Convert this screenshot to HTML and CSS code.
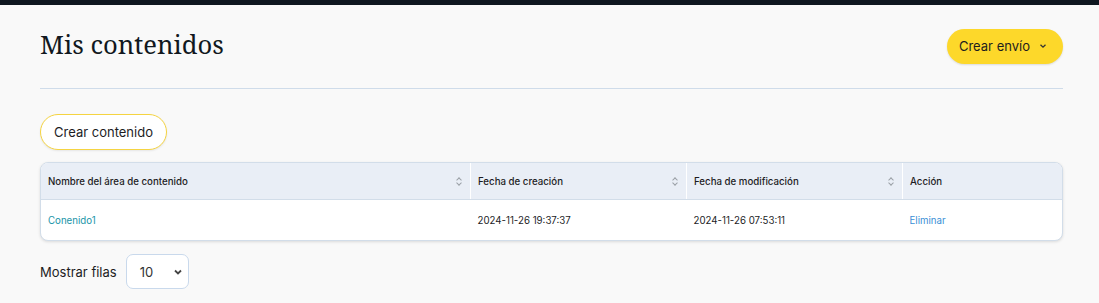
FILE: index.html
```html
<!DOCTYPE html>
<html lang="es">
<head>
  <meta charset="UTF-8">
  <meta name="viewport" content="width=device-width, initial-scale=1.0">
  <title>Mis contenidos</title>
  <link rel="stylesheet" href="styles.css">
</head>
<body>
  <div class="topbar"></div>
  <main class="page">
    <div class="page-header">
      <h1>Mis contenidos</h1>
      <button class="btn-primary">Crear envío
        <svg width="8" height="8" viewBox="0 0 8 8"><path d="M1.5 2.8 L4 5.2 L6.5 2.8" fill="none" stroke="#333" stroke-width="1.3"/></svg>
      </button>
    </div>

    <button class="btn-outline">Crear contenido</button>

    <div class="table-wrap">
      <table>
        <thead>
          <tr>
            <th class="col-name"><div class="th-in">Nombre del área de contenido <span class="sort"></span></div></th>
            <th class="col-date"><div class="th-in">Fecha de creación <span class="sort"></span></div></th>
            <th class="col-date"><div class="th-in">Fecha de modificación <span class="sort"></span></div></th>
            <th>Acción</th>
          </tr>
        </thead>
        <tbody>
          <tr>
            <td><a class="link-name" href="#">Conenido1</a></td>
            <td>2024-11-26 19:37:37</td>
            <td>2024-11-26 07:53:11</td>
            <td><a class="link-del" href="#">Eliminar</a></td>
          </tr>
        </tbody>
      </table>
    </div>

    <div class="rows">
      <label>Mostrar filas</label>
      <div class="select">10
        <svg width="10" height="10" viewBox="0 0 10 10"><path d="M2 3.5 L5 6.5 L8 3.5" fill="none" stroke="#444" stroke-width="1.8"/></svg>
      </div>
    </div>
  </main>
</body>
</html>
```

FILE: styles.css
```css
body {
  margin: 0;
  background: #f9f9f9;
  font-family: Inter, "Noto Sans", sans-serif;
  color: #1d1d1f;
}
.topbar {
  height: 5px;
  background: #0f1720;
}
.page {
  padding: 0 36px 0 40px;
}
.page-header {
  display: flex;
  justify-content: space-between;
  align-items: center;
  height: 83px;
  border-bottom: 1px solid #cfdcea;
  margin-bottom: 25px;
}
h1 {
  margin: 0;
  font-family: "Noto Serif", "DejaVu Serif", serif;
  font-weight: 400;
  font-size: 25.6px;
  color: #111820;
  padding-bottom: 4px;
}
.btn-primary {
  display: flex;
  align-items: center;
  gap: 9px;
  height: 35px;
  padding: 0 16px 0 12px;
  border: none;
  border-radius: 18px;
  background: #fdd82a;
  font-family: inherit;
  font-size: 13px;
  color: #1d1d1f;
  box-shadow: 0 1px 2px rgba(0, 0, 0, 0.12);
  margin-bottom: 1px;
}
.btn-outline {
  height: 36px;
  padding: 0 13px;
  border: 1px solid #f5d442;
  border-radius: 18px;
  background: #fff;
  font-family: inherit;
  font-size: 13px;
  color: #1d1d1f;
  box-shadow: 0 1px 2px rgba(0, 0, 0, 0.08);
}
.table-wrap {
  margin-top: 12px;
  border: 1px solid #d2dde9;
  border-radius: 8px;
  overflow: hidden;
  background: #fff;
  box-shadow: 0 1px 3px rgba(0, 0, 0, 0.12);
}
table {
  width: 100%;
  border-collapse: collapse;
  font-size: 9.7px;
}
th {
  background: #e9eef6;
  text-align: left;
  font-weight: 500;
  height: 36px;
  padding: 0 7px;
  border-bottom: 1px solid #d2dde9;
  border-right: 1px solid #fff;
}
th:last-child {
  border-right: none;
}
.col-name {
  width: 415px;
}
.col-date {
  width: 201px;
}
.th-in {
  display: flex;
  justify-content: space-between;
  align-items: center;
}
.sort {
  width: 7px;
  height: 11px;
  position: relative;
}
.sort::before,
.sort::after {
  content: '';
  position: absolute;
  left: 1px;
  width: 3px;
  height: 3px;
  border-left: 1px solid #9aa0a6;
  border-top: 1px solid #9aa0a6;
}
.sort::before {
  top: 2px;
  transform: rotate(45deg);
}
.sort::after {
  bottom: 2px;
  transform: rotate(-135deg);
}
td {
  height: 40px;
  padding: 0 7px;
  color: #1d1d1f;
}
a {
  text-decoration: none;
}
.link-name {
  color: #1994a8;
}
.link-del {
  color: #3a8fd6;
}
.rows {
  display: flex;
  align-items: center;
  gap: 9px;
  margin-top: 13px;
  font-size: 13px;
}
.select {
  display: flex;
  align-items: center;
  justify-content: space-between;
  width: 43px;
  height: 33px;
  padding: 0 5px 0 13px;
  border: 1px solid #c9d9ec;
  border-radius: 7px;
  background: #fff;
  font-size: 13px;
  color: #333;
}
```
